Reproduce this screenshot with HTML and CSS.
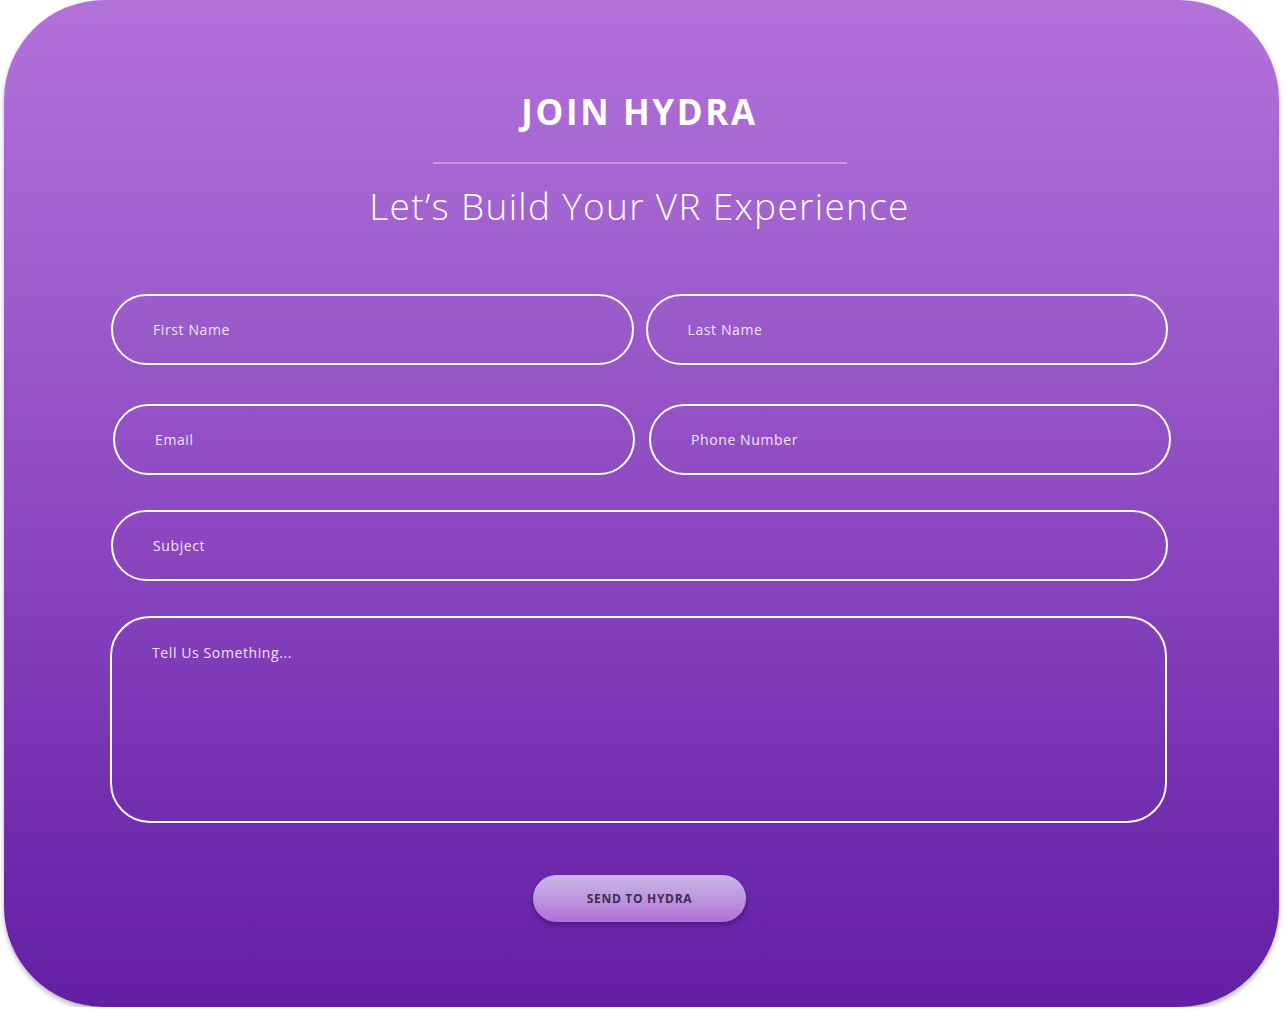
FILE: index.html
```html
<!DOCTYPE html>
<html lang="en">
<head>
<meta charset="utf-8">
<title>Join Hydra</title>
<link rel="stylesheet" href="styles.css">
</head>
<body>
<main class="card">
  <header class="head">
    <h1 class="title">JOIN HYDRA</h1>
    <hr class="divider">
    <p class="subtitle">Let’s Build Your VR Experience</p>
  </header>
  <form class="form">
    <div class="row row-first">
      <div class="field"><span class="ph">First Name</span></div>
      <div class="field"><span class="ph">Last Name</span></div>
    </div>
    <div class="row row-second">
      <div class="field"><span class="ph">Email</span></div>
      <div class="field"><span class="ph">Phone Number</span></div>
    </div>
    <div class="field field-wide"><span class="ph">Subject</span></div>
    <div class="area"><span class="ph">Tell Us Something...</span></div>
    <div class="actions"><button type="button" class="send">SEND TO HYDRA</button></div>
  </form>
</main>
</body>
</html>
```
FILE: styles.css
```css
html, body { margin: 0; padding: 0; background: #ffffff; }
body { font-family: "Open Sans", "Liberation Sans", sans-serif; }

.card {
  box-sizing: border-box;
  margin-left: 4px;
  width: 1275px;
  height: 1007px;
  border-radius: 100px;
  background: linear-gradient(180deg, #b372da 0%, #9c5ccb 30%, #8a45bf 55%, #7430b0 78%, #631ea5 100%);
  box-shadow: 0 3px 5px rgba(0,0,0,0.28);
  padding: 90px 111px 0 107px;
  color: #fff;
}

.head { display: flex; flex-direction: column; align-items: center; }
.title {
  margin: 0;
  font-size: 35px;
  font-weight: 700;
  line-height: 44px;
  letter-spacing: 2.6px;
}
.divider {
  width: 414px;
  height: 2px;
  border: 0;
  margin: 28px 0 0;
  background: rgba(220, 190, 240, 0.55);
}
.subtitle {
  margin: 17px 0 0;
  font-size: 37px;
  font-weight: 300;
  line-height: 50px;
  letter-spacing: 1.3px;
}

.form { margin-top: 63px; display: flex; flex-direction: column; }
.row { display: grid; grid-template-columns: 1fr 1fr; gap: 12px; }
.row-second { margin-top: 39px; padding-left: 2px; margin-right: -3px; column-gap: 14px; }
.field {
  box-sizing: border-box;
  height: 71px;
  border: 2px solid #fff;
  border-radius: 36px;
  display: flex;
  align-items: center;
  padding-left: 40px;
}
.field-wide { margin-top: 35px; }
.ph { font-size: 14px; color: #f0e2f7; letter-spacing: 0.6px; }
.area {
  box-sizing: border-box;
  margin-top: 35px;
  margin-left: -1px;
  margin-right: 1px;
  height: 207px;
  border: 2px solid #fff;
  border-radius: 40px;
  padding: 23px 0 0 40px;
}
.actions { display: flex; justify-content: center; margin-top: 52px; padding-left: 0; }
.send {
  width: 213px;
  height: 47px;
  border: 0;
  border-radius: 24px;
  background: linear-gradient(180deg, #c9b9e7 0%, #bb8fdd 60%, #b26fd8 100%);
  box-shadow: 0 3px 5px rgba(40,0,70,0.4);
  font-family: "Open Sans", "Liberation Sans", sans-serif;
  font-size: 12px;
  font-weight: 700;
  color: #3d2c4f;
  letter-spacing: 0.7px;
}
```
